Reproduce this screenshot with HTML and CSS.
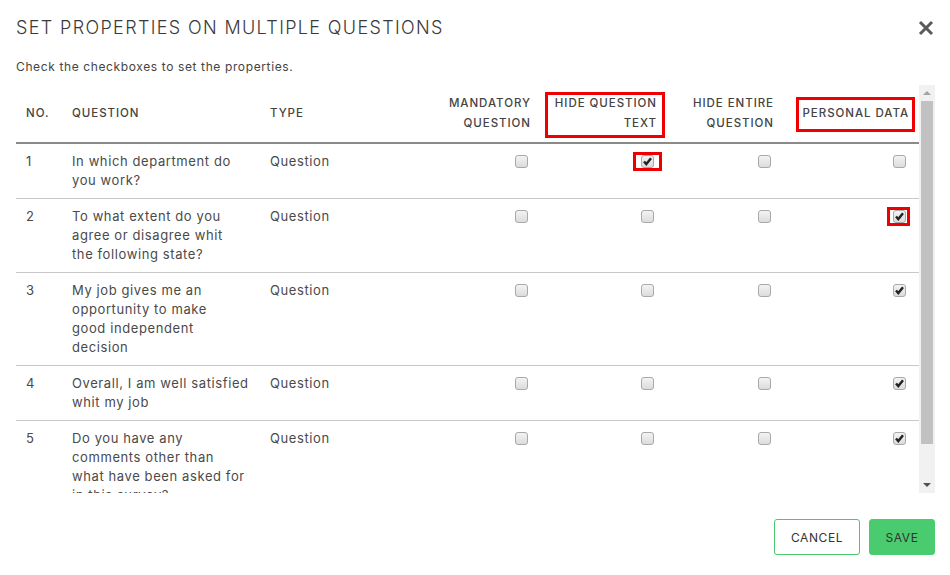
FILE: index.html
```html
<!DOCTYPE html>
<html lang="en">
<head>
<meta charset="utf-8">
<title>Set properties on multiple questions</title>
<link rel="stylesheet" href="styles.css">
</head>
<body>
<div class="dialog">
  <div class="dialog-head">
    <h1 class="title">SET PROPERTIES ON MULTIPLE QUESTIONS</h1>
    <span class="close" aria-label="Close">
      <svg width="16" height="16" viewBox="0 0 16 16"><path d="M2 2 L14 14 M14 2 L2 14" stroke="#5a5a5a" stroke-width="3" fill="none"/></svg>
    </span>
  </div>
  <p class="hint">Check the checkboxes to set the properties.</p>

  <div class="table-frame">
    <div class="scroller">
      <table class="grid">
        <colgroup>
          <col class="c-no"><col class="c-q"><col class="c-type"><col class="c-man"><col class="c-hqt"><col class="c-hen"><col class="c-pd">
        </colgroup>
        <thead>
          <tr>
            <th class="l">NO.</th>
            <th class="l">QUESTION</th>
            <th class="l">TYPE</th>
            <th>MANDATORY QUESTION</th>
            <th><span class="hl hl-hqt">HIDE QUESTION TEXT</span></th>
            <th>HIDE ENTIRE QUESTION</th>
            <th><span class="hl hl-pd">PERSONAL DATA</span></th>
          </tr>
        </thead>
        <tbody>
          <tr>
            <td class="l">1</td>
            <td class="l">In which department do you work?</td>
            <td class="l">Question</td>
            <td><span class="cb"></span></td>
            <td><span class="cb on hl hl-cb1"><svg viewBox="0 0 11 11"><path d="M2 5.5 L4.3 8.1 L9 2.2"/></svg></span></td>
            <td><span class="cb"></span></td>
            <td><span class="cb"></span></td>
          </tr>
          <tr>
            <td class="l">2</td>
            <td class="l">To what extent do you agree or disagree whit<br>the following state?</td>
            <td class="l">Question</td>
            <td><span class="cb"></span></td>
            <td><span class="cb"></span></td>
            <td><span class="cb"></span></td>
            <td><span class="cb on hl hl-cb2"><svg viewBox="0 0 11 11"><path d="M2 5.5 L4.3 8.1 L9 2.2"/></svg></span></td>
          </tr>
          <tr>
            <td class="l">3</td>
            <td class="l">My job gives me an opportunity to make<br>good independent<br>decision</td>
            <td class="l">Question</td>
            <td><span class="cb"></span></td>
            <td><span class="cb"></span></td>
            <td><span class="cb"></span></td>
            <td><span class="cb on"><svg viewBox="0 0 11 11"><path d="M2 5.5 L4.3 8.1 L9 2.2"/></svg></span></td>
          </tr>
          <tr>
            <td class="l">4</td>
            <td class="l">Overall, I am well satisfied whit my job</td>
            <td class="l">Question</td>
            <td><span class="cb"></span></td>
            <td><span class="cb"></span></td>
            <td><span class="cb"></span></td>
            <td><span class="cb on"><svg viewBox="0 0 11 11"><path d="M2 5.5 L4.3 8.1 L9 2.2"/></svg></span></td>
          </tr>
          <tr>
            <td class="l">5</td>
            <td class="l">Do you have any comments other than what have been asked for in this survey?</td>
            <td class="l">Question</td>
            <td><span class="cb"></span></td>
            <td><span class="cb"></span></td>
            <td><span class="cb"></span></td>
            <td><span class="cb on"><svg viewBox="0 0 11 11"><path d="M2 5.5 L4.3 8.1 L9 2.2"/></svg></span></td>
          </tr>
        </tbody>
      </table>
    </div>
    <div class="scrollbar" aria-hidden="true">
      <span class="sb-arrow sb-up"></span>
      <span class="sb-track"><span class="sb-thumb"></span></span>
      <span class="sb-arrow sb-down"></span>
    </div>
  </div>

  <div class="actions">
    <button class="btn btn-cancel">CANCEL</button>
    <button class="btn btn-save">SAVE</button>
  </div>
</div>
</body>
</html>
```

FILE: styles.css
```css
html, body {
  margin: 0;
  padding: 0;
  background: #ffffff;
}

body {
  font-family: Inter, "Open Sans", "Liberation Sans", sans-serif;
  color: #444444;
}

.dialog {
  width: 950px;
  height: 575px;
  box-sizing: border-box;
  padding: 15px 15px 0 16px;
}

.dialog-head {
  display: flex;
  align-items: center;
  justify-content: space-between;
  height: 26px;
}

.title {
  margin: 0;
  font-size: 18px;
  font-weight: 300;
  letter-spacing: 1.35px;
  color: #3a3a3a;
  line-height: 26px;
}

.close {
  display: flex;
  width: 16px;
  height: 16px;
  margin-right: 1px;
}

.hint {
  margin: 18px 0 0 0;
  font-size: 12px;
  line-height: 16px;
  letter-spacing: 0.62px;
  color: #444444;
}

.table-frame {
  display: flex;
  margin-top: 10px;
  height: 408px;
}

.scroller {
  flex: 1;
  overflow: hidden;
}

.scrollbar {
  width: 16px;
  display: flex;
  flex-direction: column;
  align-items: center;
  background: #f1f1f1;
}

.sb-arrow {
  width: 16px;
  height: 16px;
  display: flex;
  align-items: center;
  justify-content: center;
}

.sb-arrow::before {
  content: "";
  width: 0;
  height: 0;
  border-left: 4px solid transparent;
  border-right: 4px solid transparent;
}

.sb-up::before {
  border-bottom: 4px solid #a3a3a3;
}

.sb-down::before {
  border-top: 4px solid #505050;
}

.sb-track {
  flex: 1;
  width: 12px;
  display: flex;
  flex-direction: column;
}

.sb-thumb {
  height: 343px;
  background: #c1c1c1;
}

.grid {
  width: 903px;
  border-collapse: collapse;
  table-layout: fixed;
}

.c-no { width: 46px; }
.c-q { width: 198px; }
.c-type { width: 141px; }
.c-man { width: 140px; }
.c-hqt { width: 126px; }
.c-hen { width: 117px; }
.c-pd { width: 135px; }

.grid th {
  font-size: 11.5px;
  font-weight: 500;
  letter-spacing: 0.95px;
  line-height: 20px;
  color: #444444;
  text-align: right;
  vertical-align: middle;
  padding: 8px 10px 9px 10px;
  border-bottom: 2px solid #8a8a8a;
}

.grid td {
  font-size: 13px;
  line-height: 19px;
  letter-spacing: 0.6px;
  color: #4a4a4a;
  text-align: right;
  vertical-align: top;
  padding: 8px 10px 8px 10px;
  border-bottom: 1px solid #c8c8c8;
}

.grid .l {
  text-align: left;
}

.cb {
  display: inline-block;
  box-sizing: border-box;
  width: 13px;
  height: 13px;
  margin: 3px 3px 3px 4px;
  vertical-align: top;
  border: 1px solid #a9a9a9;
  border-radius: 3px;
  background: linear-gradient(#f3f3f3, #dcdcdc);
}

.cb svg {
  display: block;
  width: 11px;
  height: 11px;
}

.cb svg path {
  fill: none;
  stroke: #222222;
  stroke-width: 2.4;
}

.hl {
  position: relative;
}

.hl::after {
  content: "";
  position: absolute;
  border: 3px solid #ee0000;
  pointer-events: none;
}

.hl-hqt {
  display: inline-block;
  width: 100%;
}

.hl-hqt::after {
  top: -1px;
  bottom: -5px;
  left: -6px;
  right: -8px;
}

.hl-pd {
  display: inline-block;
}

.hl-pd::after {
  top: -6px;
  bottom: -9px;
  left: -7px;
  right: -6px;
}

.hl-cb1::after {
  top: -4px;
  bottom: -4px;
  left: -9px;
  right: -9px;
}

.hl-cb2::after {
  top: -4px;
  bottom: -4px;
  left: -7px;
  right: -5px;
}

.actions {
  display: flex;
  justify-content: flex-end;
  gap: 9px;
  margin-top: 26px;
}

.btn {
  height: 36px;
  box-sizing: border-box;
  border-radius: 3px;
  font-family: Inter, "Open Sans", "Liberation Sans", sans-serif;
  font-size: 12px;
  letter-spacing: 0.6px;
  color: #333333;
  cursor: pointer;
}

.btn-cancel {
  width: 86px;
  background: #ffffff;
  border: 1px solid #4cc96e;
}

.btn-save {
  width: 66px;
  background: #4acb6f;
  border: 1px solid #4acb6f;
}
```
